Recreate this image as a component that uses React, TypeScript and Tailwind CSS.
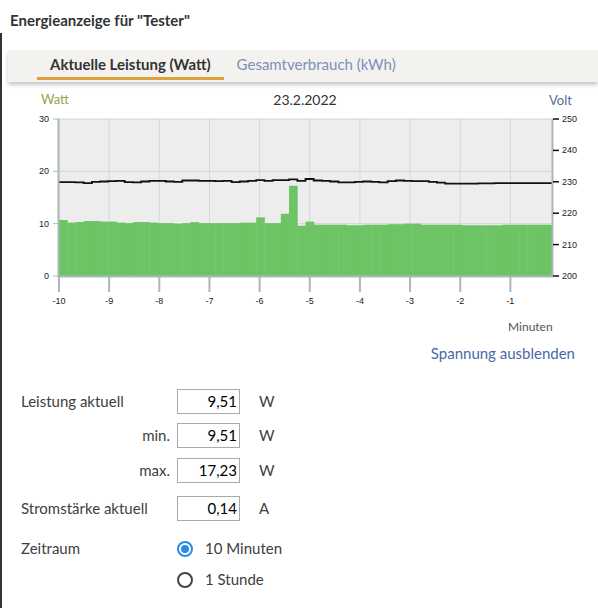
import { useState } from 'react'

const watt = [
  10.7, 10.2, 10.3, 10.5, 10.5, 10.4, 10.4, 10.2, 10.1, 10.3,
  10.3, 10.2, 10.1, 10.1, 10.0, 10.1, 10.3, 10.1, 10.1, 10.1,
  10.1, 10.1, 10.2, 10.2, 11.2, 10.1, 10.1, 11.9, 17.23, 9.6,
  10.4, 9.8, 9.8, 9.8, 9.8, 9.7, 9.7, 9.8, 9.8, 9.8,
  9.9, 9.9, 10.0, 10.0, 9.8, 9.8, 9.8, 9.8, 9.8, 9.7,
  9.7, 9.7, 9.7, 9.7, 9.8, 9.8, 9.8, 9.8, 9.8, 9.8,
]

const volt = [
  229.9, 229.9, 229.8, 229.6, 230.0, 230.1, 230.2, 230.3, 229.9, 229.8,
  230.1, 230.3, 230.3, 230.1, 230.0, 230.4, 230.4, 230.3, 230.3, 230.2,
  230.3, 229.9, 230.1, 230.3, 230.5, 230.3, 230.5, 230.5, 230.8, 230.3,
  230.9, 230.4, 230.3, 230.1, 229.8, 229.8, 230.0, 230.1, 230.0, 229.8,
  230.2, 230.4, 230.3, 230.2, 230.2, 230.0, 229.7, 229.4, 229.4, 229.4,
  229.4, 229.5, 229.5, 229.6, 229.6, 229.6, 229.6, 229.6, 229.6, 229.6,
]

// plot frame in page coordinates
const X0 = 59
const X1 = 552
const Y0 = 119
const Y1 = 276
const bw = (X1 - X0) / watt.length
const wy = (v: number) => Y1 - (v * (Y1 - Y0)) / 30
const vy = (v: number) => Y1 - ((v - 200) * (Y1 - Y0)) / 50
const minuteX = (k: number) => X0 + k * ((X1 - X0) / 9.83)

function Chart() {
  let line = ''
  volt.forEach((v, i) => {
    const x = X0 + i * bw
    line += `${i === 0 ? 'M' : 'L'}${x.toFixed(1)},${vy(v).toFixed(1)} L${(x + bw).toFixed(1)},${vy(v).toFixed(1)} `
  })

  return (
    <svg width={596} height={258} viewBox="2 82 596 258" className="block">
      <text x={41} y={104} fontSize={13} fill="#9aa04a" fontFamily="Lato, sans-serif">Watt</text>
      <text x={305} y={105} fontSize={14} fill="#333" textAnchor="middle" fontFamily="Lato, sans-serif">23.2.2022</text>
      <text x={549} y={105} fontSize={13} fill="#5b6b98" fontFamily="Lato, sans-serif">Volt</text>

      <rect x={X0} y={Y0} width={X1 - X0} height={Y1 - Y0} fill="#ededed" />
      {[0, 1, 2, 3, 4, 5, 6, 7, 8, 9].map((k) => (
        <line key={k} x1={minuteX(k)} x2={minuteX(k)} y1={Y0} y2={Y1} stroke="#d6d6d6" strokeWidth={1} />
      ))}
      {[10, 20, 30].map((v) => (
        <line key={v} x1={X0} x2={X1} y1={wy(v)} y2={wy(v)} stroke="#d6d6d6" strokeWidth={1} />
      ))}

      {watt.map((v, i) => (
        <rect key={i} x={X0 + i * bw} y={wy(v)} width={bw + 0.4} height={Y1 - wy(v)} fill="#6cc465" />
      ))}

      <path d={line} fill="none" stroke="#111" strokeWidth={1.8} />

      {/* axes */}
      <line x1={X0 - 0.5} x2={X0 - 0.5} y1={Y0} y2={Y1 + 1} stroke="#a9b9b9" strokeWidth={2} />
      <line x1={X1 + 0.5} x2={X1 + 0.5} y1={Y0} y2={Y1 + 1} stroke="#a9b9b9" strokeWidth={2} />
      <line x1={X0 - 1} x2={X1 + 1} y1={Y1 + 0.5} y2={Y1 + 0.5} stroke="#a9b9b9" strokeWidth={2} />

      {[0, 10, 20, 30].map((v) => (
        <g key={v}>
          <line x1={X0 - 6} x2={X0} y1={wy(v)} y2={wy(v)} stroke="#a9b9b9" strokeWidth={1} />
          <text x={49} y={wy(v) + 3} fontSize={9} fill="#222" textAnchor="end" fontFamily="'Liberation Sans', sans-serif">{v}</text>
        </g>
      ))}
      {[200, 210, 220, 230, 240, 250].map((v) => (
        <g key={v}>
          <line x1={X1 + 1} x2={X1 + 7} y1={vy(v)} y2={vy(v)} stroke="#111" strokeWidth={1.5} />
          <text x={562} y={vy(v) + 3} fontSize={9} fill="#222" fontFamily="'Liberation Sans', sans-serif">{v}</text>
        </g>
      ))}
      {[0, 1, 2, 3, 4, 5, 6, 7, 8, 9].map((k) => (
        <g key={k}>
          <line x1={minuteX(k)} x2={minuteX(k)} y1={Y1 + 1} y2={Y1 + 16} stroke="#a9b9b9" strokeWidth={2} />
          <text x={minuteX(k)} y={304} fontSize={9} fill="#222" textAnchor="middle" fontFamily="'Liberation Sans', sans-serif">{k - 10}</text>
        </g>
      ))}
      <text x={508} y={331} fontSize={12} fill="#555" fontFamily="Lato, sans-serif">Minuten</text>
    </svg>
  )
}

function Field({ label, value, unit, right }: { label: string; value: string; unit: string; right?: boolean }) {
  return (
    <div className="flex items-center h-[25px]">
      <div className={`w-[149px] ${right ? 'text-right' : ''}`}>{label}</div>
      <div className="ml-[7px] w-[63px] h-[25px] border border-[#aaa] flex items-center justify-end pr-[2px] text-black">
        {value}
      </div>
      <div className="ml-[19px]">{unit}</div>
    </div>
  )
}

function Radio({ checked, label, onClick }: { checked: boolean; label: string; onClick: () => void }) {
  return (
    <button onClick={onClick} className="flex items-center h-[31px] gap-[12px]">
      <span
        className={`w-[16px] h-[16px] rounded-full border-2 flex items-center justify-center ${
          checked ? 'border-[#2b8be2]' : 'border-[#444]'
        }`}
      >
        {checked && <span className="w-[8px] h-[8px] rounded-full bg-[#2b8be2]" />}
      </span>
      <span>{label}</span>
    </button>
  )
}

export default function App() {
  const [tab, setTab] = useState(0)
  const [range, setRange] = useState(0)

  return (
    <div className="w-[598px] h-[608px] overflow-hidden bg-white text-[#404040] font-['Lato',sans-serif]">
      <div className="h-[33px] pl-[10px] pt-[11px] text-[15px] leading-[18px] font-bold text-[#333]">
        Energieanzeige für "Tester"
      </div>

      <div className="border-l-2 border-[#333] h-[575px]">
        <div className="pt-[17px]">
          <div className="ml-[6px] h-[32px] bg-[#f3f2ef] shadow-[0_3px_4px_rgba(0,0,0,0.22)] flex pl-[29px]">
            {['Aktuelle Leistung (Watt)', 'Gesamtverbrauch (kWh)'].map((t, i) => (
              <button
                key={t}
                onClick={() => setTab(i)}
                className={`px-[13px] h-[32px] text-[15px] pt-[2px] flex flex-col items-stretch ${
                  tab === i ? 'font-bold text-[#333]' : 'text-[#7c8fbb]'
                }`}
              >
                <span className="flex-1 flex items-center">{t}</span>
                <span className={`h-[3px] mb-[2px] -mx-[13px] ${tab === i ? 'bg-[#d9a23c]' : ''}`} />
              </button>
            ))}
          </div>
        </div>

        <Chart />

        <div className="h-[26px] leading-[26px] text-right pr-[23px] text-[15px] text-[#4a6aa6]">
          Spannung ausblenden
        </div>

        <div className="pl-[19px] pt-[23px] text-[15px]">
          <Field label="Leistung aktuell" value="9,51" unit="W" />
          <div className="h-[9px]" />
          <Field label="min." value="9,51" unit="W" right />
          <div className="h-[10px]" />
          <Field label="max." value="17,23" unit="W" right />
          <div className="h-[13px]" />
          <Field label="Stromstärke aktuell" value="0,14" unit="A" />

          <div className="flex mt-[12px]">
            <div className="w-[156px] h-[31px] leading-[31px]">Zeitraum</div>
            <div className="flex flex-col">
              <Radio checked={range === 0} label="10 Minuten" onClick={() => setRange(0)} />
              <Radio checked={range === 1} label="1 Stunde" onClick={() => setRange(1)} />
            </div>
          </div>
        </div>
      </div>
    </div>
  )
}
